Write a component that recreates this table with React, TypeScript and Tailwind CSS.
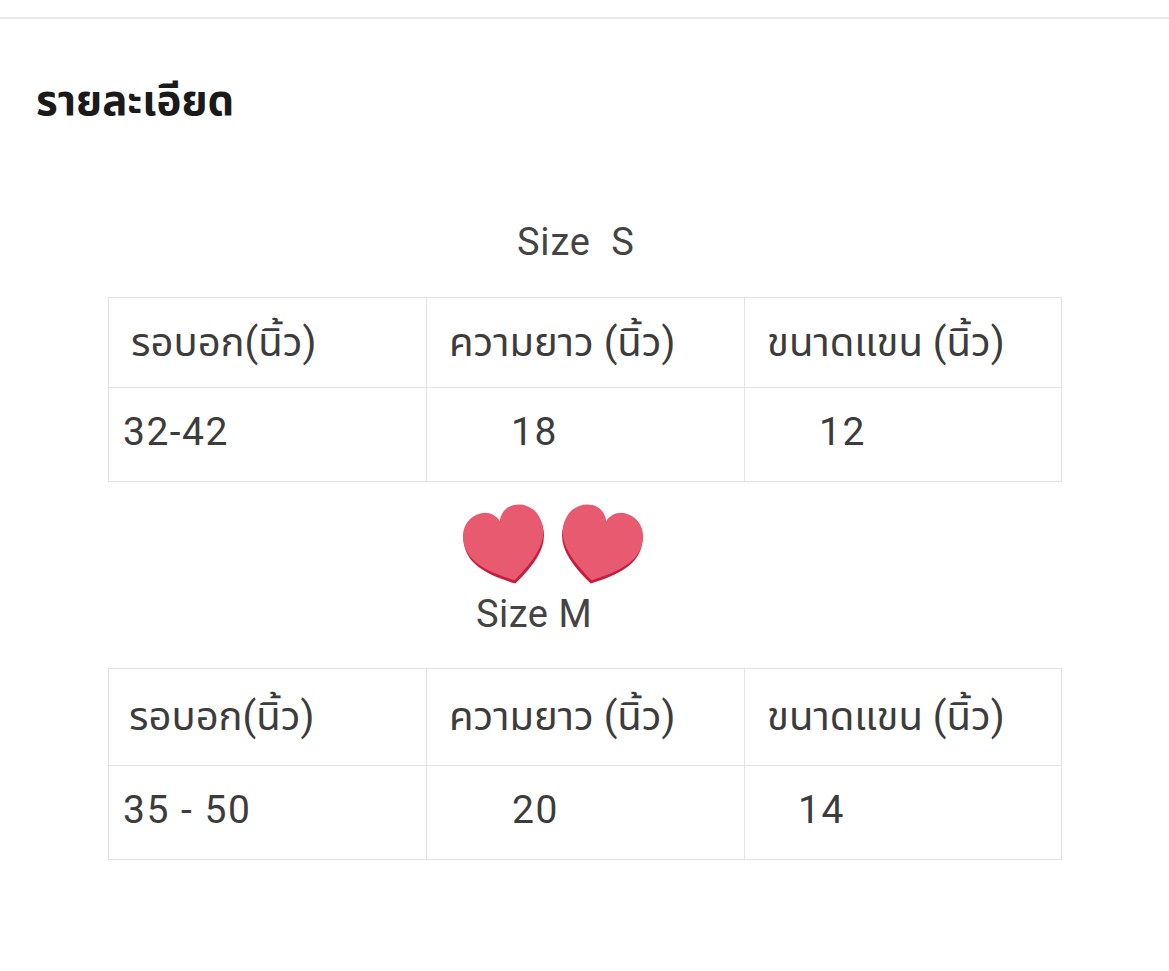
import React from 'react';

const thai = { fontFamily: 'Roboto, "Noto Sans", "Noto Sans Thai", sans-serif' };

type Row = { cells: string[]; pads: string[] };

function Heart({ tilt }: { tilt: 'left' | 'right' }) {
  return (
    <svg
      viewBox="0 0 100 100"
      className={`h-[86px] w-[86px] ${tilt === 'left' ? '-rotate-[14deg]' : 'rotate-[14deg]'}`}
    >
      <path
        d="M50 93 C18 74 3 58 3 37 C3 18 16 7 30 7 C40 7 47 13 50 21 C53 13 60 7 70 7 C84 7 97 18 97 37 C97 58 82 74 50 93Z"
        fill="#c81e3c"
        transform="translate(0 2)"
      />
      <path
        d="M50 91 C18 72 3 56 3 36 C3 17 16 6 30 6 C40 6 47 12 50 20 C53 12 60 6 70 6 C84 6 97 17 97 36 C97 56 82 72 50 91Z"
        fill="#e85a70"
      />
    </svg>
  );
}

function SizeTable({
  head,
  data,
  headH,
  dataH,
}: {
  head: Row;
  data: Row;
  headH: string;
  dataH: string;
}) {
  return (
    <div className="w-[954px] border border-[#e3e3e3] text-[#3c3c3c]" style={thai}>
      <div className={`grid grid-cols-[318px_318px_1fr] border-b border-[#e3e3e3] ${headH}`}>
        {head.cells.map((c, i) => (
          <div
            key={i}
            className={`flex items-center whitespace-nowrap text-[40px] ${head.pads[i]} ${i < 2 ? 'border-r border-[#e3e3e3]' : ''}`}
          >
            {c}
          </div>
        ))}
      </div>
      <div className={`grid grid-cols-[318px_318px_1fr] ${dataH}`}>
        {data.cells.map((c, i) => (
          <div
            key={i}
            className={`flex items-center pb-[4px] text-[39px] tracking-[1.5px] ${data.pads[i]} ${i < 2 ? 'border-r border-[#e3e3e3]' : ''}`}
          >
            {c}
          </div>
        ))}
      </div>
    </div>
  );
}

export default function App() {
  return (
    <div className="min-h-[971px] w-[1169px] bg-white">
      <div className="h-[19px] border-b-2 border-[#e8e8e8]" />

      <h1
        className="pl-[36px] pt-[58px] text-[42px] font-bold leading-[48px] text-[#1a1a1a]"
        style={thai}
      >
        รายละเอียด
      </h1>

      <div className="ml-[108px] mt-[95px]">
        <div
          className="whitespace-pre pl-[409px] text-[38px] leading-[44px] tracking-[0.8px] text-[#444]"
          style={{ fontFamily: 'Roboto, sans-serif' }}
        >
          Size  S
        </div>

        <div className="mt-[33px]">
          <SizeTable
            head={{
              cells: ['รอบอก(นิ้ว)', 'ความยาว (นิ้ว)', 'ขนาดแขน (นิ้ว)'],
              pads: ['pl-[22px]', 'pl-[22px]', 'pl-[22px]'],
            }}
            data={{ cells: ['32-42', '18', '12'], pads: ['pl-[14px]', 'pl-[84px]', 'pl-[74px]'] }}
            headH="h-[90px]"
            dataH="h-[93px]"
          />
        </div>

        <div className="mt-[21px] flex gap-[8px] pl-[355px]">
          <Heart tilt="left" />
          <Heart tilt="right" />
        </div>

        <div
          className="pl-[368px] pt-[5px] text-[38px] leading-[40px] tracking-[0.5px] text-[#444]"
          style={{ fontFamily: 'Roboto, sans-serif' }}
        >
          Size M
        </div>

        <div className="mt-[34px]">
          <SizeTable
            head={{
              cells: ['รอบอก(นิ้ว)', 'ความยาว (นิ้ว)', 'ขนาดแขน (นิ้ว)'],
              pads: ['pl-[20px]', 'pl-[22px]', 'pl-[22px]'],
            }}
            data={{ cells: ['35 - 50', '20', '14'], pads: ['pl-[14px]', 'pl-[85px]', 'pl-[53px]'] }}
            headH="h-[97px]"
            dataH="h-[93px]"
          />
        </div>
      </div>
    </div>
  );
}
